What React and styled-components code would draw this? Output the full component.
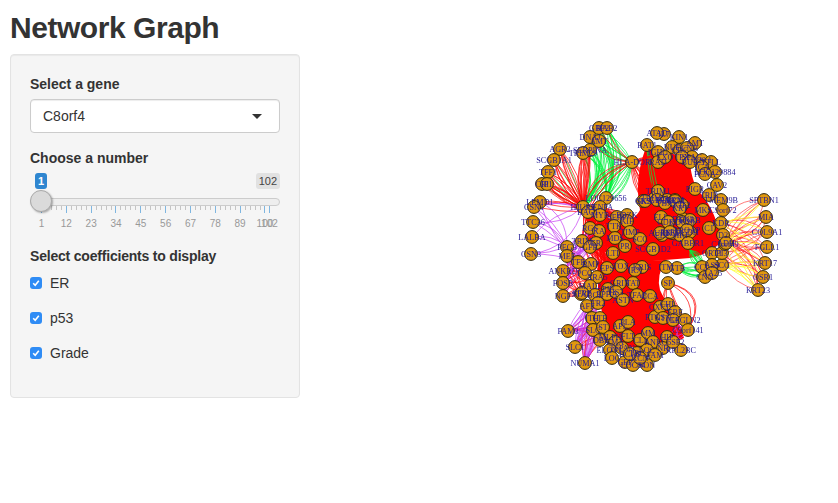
import styled, { createGlobalStyle } from 'styled-components';

const GlobalStyle = createGlobalStyle`
	html, body {
		margin: 0;
		background: #fff;
	}
	body {
		font-family: "Liberation Sans", Arial, sans-serif;
		font-size: 14px;
		color: #333;
	}
`;

const Page = styled.div`
	padding: 11px 10px 0;
	width: 838px;
	height: 503px;
	box-sizing: border-box;
	overflow: hidden;
`;
const Title = styled.h1`
	font-size: 30px;
	line-height: 33px;
	font-weight: 700;
	letter-spacing: -0.45px;
	margin: 0 0 10px;
`;
const Columns = styled.div`
	display: flex;
	gap: 10px;
`;
const Panel = styled.div`
	box-sizing: border-box;
	flex: 0 0 290px;
	align-self: flex-start;
	padding: 19px;
	background: #f5f5f5;
	border: 1px solid #e3e3e3;
	border-radius: 4px;
	box-shadow: inset 0 1px 1px rgba(0, 0, 0, 0.05);
`;
const Field = styled.div`
	margin-bottom: 15px;
`;
const Label = styled.div`
	font-weight: 700;
	line-height: 20px;
	margin-bottom: ${ ( props ) => props.$gap ?? 5 }px;
	letter-spacing: ${ ( props ) => ( props.$tight ? '-0.2px' : '0' ) };
`;
const SelectBox = styled.div`
	display: flex;
	align-items: center;
	justify-content: space-between;
	box-sizing: border-box;
	height: 34px;
	padding: 0 17px 0 12px;
	background: #fff;
	border: 1px solid #ccc;
	border-radius: 4px;
	box-shadow: inset 0 1px 1px rgba(0, 0, 0, 0.075);
`;
const Caret = styled.span`
	width: 0;
	height: 0;
	border-style: solid;
	border-width: 5px 5px 0;
	border-color: #333 transparent transparent;
`;
const Slider = styled.div`
	display: flex;
	flex-direction: column;
	padding: 5px 0 1px;
`;
const BadgeRow = styled.div`
	display: flex;
	justify-content: space-between;
	align-items: flex-start;
	height: 16px;
	padding-left: 5px;
	margin-bottom: 1px;
`;
const Badge = styled.span`
	padding: 1px 3px;
	font-size: 11px;
	line-height: 14px;
	border-radius: 3px;
	background: ${ ( props ) => ( props.$active ? '#2f86d0' : '#e1e1e1' ) };
	color: ${ ( props ) => ( props.$active ? '#fff' : '#444' ) };
	font-weight: ${ ( props ) => ( props.$active ? 700 : 400 ) };
`;
const TrackRow = styled.div`
	position: relative;
	display: flex;
	align-items: flex-end;
	height: 16px;
`;
const Track = styled.div`
	flex: 1;
	box-sizing: border-box;
	height: 8px;
	background: #eee;
	border: 1px solid #ccc;
	border-radius: 4px;
`;
const Handle = styled.div`
	position: absolute;
	left: 0;
	top: 0;
	box-sizing: border-box;
	width: 22px;
	height: 22px;
	background: #dadada;
	border: 1px solid #aaa;
	border-radius: 50%;
	box-shadow: 1px 1px 2px rgba(0, 0, 0, 0.3);
`;
const TickSvg = styled.svg`
	display: block;
	width: 250px;
	height: 7px;
`;
const ScaleLabels = styled.div`
	display: grid;
	grid-template-columns: repeat(9, 24.83px) 4.5px 0;
	padding-left: 11px;
	margin-top: 5px;
`;
const ScaleLabel = styled.span`
	display: flex;
	justify-content: center;
	width: 1px;
	font-size: 10px;
	line-height: 12px;
	color: #999;
`;
const CheckList = styled.div`
	display: flex;
	flex-direction: column;
	gap: 15px;
	margin: 7px 0 15px;
`;
const CheckRow = styled.div`
	display: flex;
	align-items: center;
	gap: 8px;
	line-height: 20px;
`;
const CheckBox = styled.span`
	display: flex;
	align-items: center;
	justify-content: center;
	width: 12px;
	height: 12px;
	background: #2f8cf5;
	border-radius: 3px;
`;
const GraphArea = styled.div`
	flex: 1;
	height: 400px;
`;
const GraphSvg = styled.svg`
	display: block;
	width: 528px;
	height: 400px;
	filter: blur(0.3px);
`;
const NodeLabel = styled.text`
	font-family: "Liberation Serif", "Times New Roman", serif;
	font-size: 8.2px;
	fill: #241a96;
	text-anchor: middle;
	dominant-baseline: central;
`;

const nodes = [
	[ 599, 128, 'GBP2' ], [ 607, 128, 'RAB2' ], [ 590, 137, 'DNAJ' ], [ 599, 141, 'AMT' ], [ 590, 150, 'SERPINA' ],
	[ 583, 153, 'TRIM29' ], [ 560, 149, 'AGR2' ], [ 554, 160, 'SCGB1A1' ], [ 548, 172, 'TFF1' ], [ 542, 184, 'CRI' ],
	[ 547, 184, 'IP1' ], [ 540, 202, 'LEMD1' ], [ 534, 207, 'CSN1' ], [ 533, 222, 'TTC36' ], [ 532, 237, 'LALBA' ],
	[ 531, 254, 'CSN3' ], [ 632, 162, 'HLA-DOR' ], [ 583, 207, 'HJURP' ], [ 606, 198, 'LOC129656' ],
	[ 588, 212, 'BAG1' ], [ 600, 207, 'CENPA' ], [ 600, 215, 'MYB' ], [ 617, 217, 'SERP' ], [ 627, 215, 'PDZK' ],
	[ 627, 221, 'KIF' ], [ 614, 226, 'TTK' ], [ 590, 228, 'RGS' ], [ 599, 231, 'KA' ], [ 582, 241, 'TRIM' ],
	[ 596, 243, 'ER' ], [ 590, 247, 'GFR' ], [ 615, 238, 'MDS' ], [ 625, 246, 'PR' ], [ 630, 232, 'TIMP' ],
	[ 640, 239, 'SCC' ], [ 613, 253, 'LTI' ], [ 653, 249, 'SCGB1D2' ], [ 662, 235, 'ELF' ], [ 672, 233, 'ITGB' ],
	[ 661, 217, 'ELL' ], [ 643, 201, 'CKS' ], [ 655, 198, 'TRIM11' ], [ 667, 200, 'FOXC' ], [ 675, 200, 'RRM' ],
	[ 682, 205, 'KIF2' ], [ 683, 219, 'DKK3' ], [ 690, 232, 'CDH' ], [ 680, 235, 'MKI' ], [ 688, 243, 'GABBR1' ],
	[ 677, 268, 'GTB' ], [ 666, 267, 'ITM' ], [ 668, 283, 'SP' ], [ 642, 267, 'KRIS' ], [ 635, 270, 'IRX' ],
	[ 621, 266, 'TOX' ], [ 607, 268, 'EPS' ], [ 591, 264, 'BMP' ], [ 578, 262, 'TFF' ], [ 585, 273, 'PCG' ],
	[ 597, 277, 'ARA5' ], [ 590, 286, 'MAL2' ], [ 620, 283, 'GRIN' ], [ 633, 283, 'TAT' ], [ 608, 289, 'PIP' ],
	[ 581, 294, 'STAT' ], [ 595, 295, 'BCL' ], [ 607, 294, 'EPHA' ], [ 616, 292, 'HS3' ], [ 623, 300, 'ASTN' ],
	[ 637, 295, 'TFAP' ], [ 650, 296, 'GCA' ], [ 587, 306, 'AFF' ], [ 598, 303, 'TR2' ], [ 592, 318, 'ITH' ],
	[ 600, 318, 'LTF' ], [ 593, 330, 'SLC' ], [ 603, 327, 'ST' ], [ 610, 337, 'MLPH' ], [ 600, 340, 'DBI' ],
	[ 615, 342, 'EMA' ], [ 610, 350, 'ELOVL' ], [ 622, 348, 'TSPAN' ], [ 620, 326, 'APL' ], [ 628, 322, 'PLA' ],
	[ 628, 336, 'FLT' ], [ 640, 340, 'CLI' ], [ 648, 333, 'MM' ], [ 653, 342, 'ANK' ], [ 667, 337, 'HIP' ],
	[ 655, 317, 'PTGS' ], [ 660, 307, 'CXCL' ], [ 668, 304, 'CHL' ], [ 675, 312, 'EBF' ], [ 663, 318, 'NTN' ],
	[ 673, 320, 'IGF' ], [ 685, 320, 'TAGLN2' ], [ 688, 330, 'C9orf141' ], [ 681, 350, 'RPL2BC' ], [ 663, 348, 'NR' ],
	[ 673, 342, 'C6SF2' ], [ 647, 350, 'LOC' ], [ 637, 353, 'TBC' ], [ 625, 362, 'CEP' ], [ 633, 365, 'LOC84' ],
	[ 647, 365, 'SON' ], [ 640, 358, 'KCN' ], [ 630, 354, 'BCAS' ], [ 655, 355, 'FAM' ], [ 612, 358, 'LOC' ],
	[ 563, 271, 'ANKRD' ], [ 563, 283, 'FOSB' ], [ 563, 296, 'NGF' ], [ 567, 247, 'PEG3' ], [ 567, 256, 'MEF' ],
	[ 568, 331, 'FAM3' ], [ 575, 347, 'SLC1' ], [ 585, 363, 'NUMA1' ], [ 582, 293, 'SFRP' ],
	[ 764, 200, 'SPTBN1' ], [ 766, 217, 'MIA' ], [ 767, 232, 'COL9A1' ], [ 767, 247, 'FGLL1' ], [ 765, 263, 'KRT17' ],
	[ 763, 277, 'OSR1' ], [ 758, 290, 'KRT23' ], [ 722, 265, 'SCG' ], [ 712, 253, 'ORT1' ], [ 722, 253, 'PI3' ],
	[ 725, 244, 'C1orf49' ], [ 702, 267, 'CCL' ], [ 712, 265, 'ASS' ], [ 705, 277, 'CNN' ], [ 712, 273, 'AA25' ],
	[ 717, 185, 'CAV2' ], [ 709, 195, 'TRIB' ], [ 721, 200, 'TMEM9B' ], [ 723, 210, 'C9orf72' ], [ 721, 223, 'KDR' ],
	[ 709, 228, 'C1' ], [ 723, 235, 'D2' ], [ 726, 243, 'ADH' ], [ 695, 189, 'PIGR' ], [ 703, 210, 'MKS' ],
	[ 695, 143, 'AMT' ], [ 679, 137, 'KIN1' ], [ 664, 134, 'IL7' ], [ 657, 133, 'ATAD' ], [ 647, 145, 'BAT1' ],
	[ 672, 147, 'NUF' ], [ 680, 150, 'CDC' ], [ 687, 148, 'CCNB' ], [ 692, 157, 'SPAG' ], [ 702, 160, 'C20.1' ],
	[ 711, 162, 'TTLL' ], [ 702, 167, 'ICA' ], [ 715, 172, 'LOC129884' ], [ 705, 174, 'PCNA' ], [ 658, 152, 'IGHG' ],
	[ 658, 162, 'RAD' ], [ 665, 157, 'EXO' ], [ 682, 157, 'TPX' ], [ 690, 162, 'BUB' ], [ 658, 191, 'TRIM1' ],
	[ 645, 201, 'SKA' ], [ 657, 200, 'GPR' ], [ 665, 203, 'FBX' ], [ 675, 201, 'MCM' ], [ 680, 208, 'KRT' ],
	[ 668, 222, 'CDK1' ], [ 682, 222, 'CDC20' ], [ 690, 220, 'ERBB' ], [ 660, 233, 'AURK' ], [ 670, 232, 'ESPL' ],
	[ 687, 230, 'TROAP' ],
];

// small seeded generator so the graph comes out the same on every render
let seed = 20;
const rand = () => {
	seed = ( seed * 16807 ) % 2147483647;
	return seed / 2147483647;
};

const curve = ( a, b, bend ) => {
	const mx = ( a[ 0 ] + b[ 0 ] ) / 2;
	const my = ( a[ 1 ] + b[ 1 ] ) / 2;
	const dx = b[ 0 ] - a[ 0 ];
	const dy = b[ 1 ] - a[ 1 ];
	return `M${ a[ 0 ] } ${ a[ 1 ] }Q${ mx - dy * bend } ${ my + dx * bend } ${ b[ 0 ] } ${ b[ 1 ] }`;
};

const bundle = ( from, to, spread = 0.35, repeat = 1, bias = 0 ) => {
	let d = '';
	for ( let r = 0; r < repeat; r++ ) {
		from.forEach( ( a ) => to.forEach( ( b ) => {
			d += curve( a, b, bias + ( rand() - 0.5 ) * 2 * spread );
		} ) );
	}
	return d;
};

const near = ( x0, y0, x1, y1 ) => nodes.filter( ( n ) => n[ 0 ] >= x0 && n[ 0 ] <= x1 && n[ 1 ] >= y0 && n[ 1 ] <= y1 );

const topLeft = near( 583, 125, 612, 156 );
const leftArc = near( 540, 145, 565, 190 );
const farLeft = near( 528, 200, 545, 256 );
const midLeft = near( 560, 245, 570, 300 );
const lowLeft = near( 565, 325, 590, 365 );
const hub = [ [ 583, 207 ], [ 588, 212 ] ];
const hla = [ [ 632, 162 ] ];
const rightFan = near( 755, 195, 770, 292 );
const rightCore = near( 718, 220, 726, 270 );
const upperCore = near( 640, 195, 695, 245 );
const lowerCore = near( 605, 265, 665, 340 );
const joinCore = near( 582, 205, 640, 262 );

const edges = [
	{ color: '#00f03c', width: 0.7, d: bundle( topLeft, [ [ 583, 207 ], [ 606, 198 ] ], 0.12, 3, -0.32 ) + bundle( hla, [ [ 583, 207 ], [ 600, 207 ] ], 0.35, 5 ) + bundle( near( 590, 128, 610, 145 ), hla, 0.5, 2 ) + bundle( leftArc, [ [ 583, 207 ] ], 0.1 ) + bundle( near( 700, 262, 715, 280 ), [ [ 677, 268 ], [ 690, 250 ] ], 0.6, 3 ) + bundle( [ [ 647, 145 ] ], near( 640, 165, 660, 200 ), 0.12 ) },
	{ color: '#ff0000', width: 0.7, d: bundle( leftArc, hub, 0.22, 3 ) + bundle( [ [ 583, 153 ], [ 590, 150 ] ], [ [ 583, 207 ] ], 0.22, 7, 0.05 ) + bundle( farLeft.slice( 0, 2 ), hub, 0.2 ) + bundle( near( 590, 128, 610, 145 ), hla, 0.3 ) + bundle( hla, near( 640, 150, 665, 205 ), 0.25, 2 ) + bundle( hla, hub, 0.12, 3, 0.25 ) + bundle( [ [ 668, 283 ] ], near( 675, 315, 690, 335 ), 0.75, 4 ) + bundle( lowLeft, near( 590, 300, 610, 345 ), 0.3 ) + bundle( midLeft, near( 575, 262, 600, 300 ), 0.2 ) + bundle( joinCore, near( 605, 262, 650, 300 ), 0.1 ) + bundle( joinCore, joinCore, 0.12 ) },
	{ color: '#c53cf2', width: 0.7, d: bundle( farLeft, [ [ 583, 207 ], [ 578, 262 ], [ 567, 247 ] ], 0.35 ) + bundle( midLeft, near( 578, 228, 600, 250 ), 0.2 ) + bundle( lowLeft, near( 587, 294, 600, 330 ), 0.28, 2 ) + bundle( near( 675, 318, 690, 352 ), near( 665, 318, 680, 345 ), 0.3 ) },
	{ color: '#ff2020', width: 0.6, d: bundle( rightFan, rightCore, 0.32 ) },
	{ color: '#ffff33', width: 0.8, d: bundle( rightFan, [ [ 725, 244 ], [ 721, 223 ] ], 0.22 ) + bundle( rightFan.slice( 4 ), [ [ 722, 265 ] ], 0.3, 2 ) },
	{ color: '#ff0000', width: 0.9, d: bundle( upperCore, upperCore, 0.12 ) + bundle( lowerCore, lowerCore, 0.12 ) },
];

// the solid red middle of the two dense clusters
const SOLID_TOP = 'M645 150 Q670 148 690 163 Q692 185 702 195 Q716 212 722 242 Q705 256 690 258 L640 262 Q620 262 612 255 Q604 244 606 232 Q634 222 640 210 Q634 180 645 150 Z';
const SOLID_BOTTOM = 'M598 262 L666 260 Q656 275 660 290 Q664 300 674 310 L684 338 Q660 350 650 348 L612 346 Q602 320 598 290 Z';

const majors = [ 1, 12, 23, 34, 45, 56, 67, 78, 89, 100, 102 ];
const tickLeft = ( v ) => Math.round( 11 + ( ( v - 1 ) / 101 ) * 228 ) + 0.5;
const minors = [];
for ( let i = 0; i < 9; i++ ) {
	for ( let j = 1; j < 5; j++ ) {
		minors.push( majors[ i ] + j * 2.2 );
	}
}

const genes = [ 'ER', 'p53', 'Grade' ];

const App = () => (
	<>
		<GlobalStyle />
		<Page>
			<Title>Network Graph</Title>
			<Columns>
				<Panel>
					<Field>
						<Label>Select a gene</Label>
						<SelectBox>
							C8orf4
							<Caret />
						</SelectBox>
					</Field>
					<Field>
						<Label $gap={ 0 }>Choose a number</Label>
						<Slider>
							<BadgeRow>
								<Badge $active>1</Badge>
								<Badge>102</Badge>
							</BadgeRow>
							<TrackRow>
								<Track />
								<Handle />
							</TrackRow>
							<TickSvg viewBox="0 0 250 7">
								{ minors.map( ( v ) => (
									<line key={ v } x1={ tickLeft( v ) } x2={ tickLeft( v ) } y1="0" y2="4" stroke="#c4c4c4" />
								) ) }
								{ majors.map( ( v ) => (
									<line key={ v } x1={ tickLeft( v ) } x2={ tickLeft( v ) } y1="0" y2="7" stroke="#7fb6e0" />
								) ) }
							</TickSvg>
							<ScaleLabels>
								{ majors.map( ( v ) => (
									<ScaleLabel key={ v }>{ v }</ScaleLabel>
								) ) }
							</ScaleLabels>
						</Slider>
					</Field>
					<Label $gap={ 0 } $tight>Select coefficients to display</Label>
					<CheckList>
						{ genes.map( ( gene ) => (
							<CheckRow key={ gene }>
								<CheckBox>
									<svg width="8" height="8" viewBox="0 0 8 8">
										<path d="M1.2 4.2 L3.2 6.2 L6.8 1.8" fill="none" stroke="#fff" strokeWidth="1.6" />
									</svg>
								</CheckBox>
								{ gene }
							</CheckRow>
						) ) }
					</CheckList>
				</Panel>
				<GraphArea>
					<GraphSvg viewBox="310 54 528 400">
						<path d={ SOLID_TOP } fill="#ff0000" />
						<path d={ SOLID_BOTTOM } fill="#ff0000" />
						{ edges.map( ( e, i ) => (
							<path key={ i } d={ e.d } fill="none" stroke={ e.color } strokeWidth={ e.width } />
						) ) }
						{ nodes.map( ( n, i ) => (
							<circle key={ i } cx={ n[ 0 ] } cy={ n[ 1 ] } r="6.4" fill="#e0980f" stroke="#2b2410" strokeWidth="1" />
						) ) }
						{ nodes.map( ( n, i ) => (
							<NodeLabel key={ i } x={ n[ 0 ] } y={ n[ 1 ] }>{ n[ 2 ] }</NodeLabel>
						) ) }
					</GraphSvg>
				</GraphArea>
			</Columns>
		</Page>
	</>
);

export default App;
